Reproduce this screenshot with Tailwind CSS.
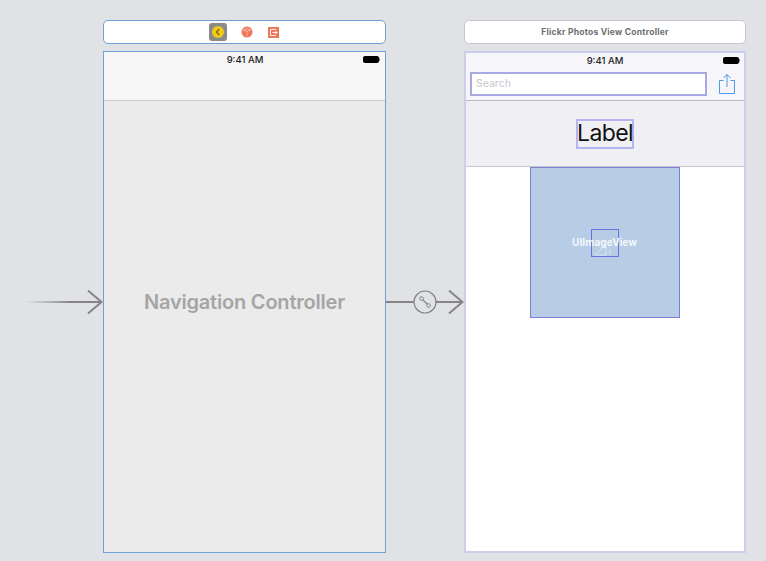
<!DOCTYPE html>
<html lang="en">
<head>
  <meta charset="UTF-8" />
  <meta name="viewport" content="width=device-width, initial-scale=1.0" />
  <title>Storyboard</title>
  <script src="https://cdn.jsdelivr.net/npm/@tailwindcss/browser@4"></script>
</head>
<body class="bg-[#e0e2e5] font-['Inter','Liberation_Sans',sans-serif] text-black overflow-hidden">
  <div class="relative w-[766px] h-[561px] overflow-hidden">

    <!-- initial arrow -->
    <svg class="absolute left-[26px] top-[288px]" width="80" height="28" viewBox="0 0 80 28" fill="none">
      <defs>
        <linearGradient id="fade" x1="0" x2="1" y1="0" y2="0">
          <stop offset="0" stop-color="#8a8a8a" stop-opacity="0" />
          <stop offset="0.6" stop-color="#858585" />
        </linearGradient>
      </defs>
      <rect x="0" y="13" width="75" height="2" fill="url(#fade)" />
      <path d="M62 2.5 L75.5 14 L62 25.5" stroke="#858585" stroke-width="2" />
    </svg>

    <!-- navigation scene -->
    <div class="absolute left-[103px] top-[20px] w-[283px]">
      <div class="h-[24px] bg-white border border-[#6f9fd8] rounded-[5px] flex items-center justify-center gap-[10px]">
        <div class="w-[18px] h-[18px] rounded-[3px] bg-[#8a8a8a] flex items-center justify-center mr-[1px] ml-[-2px]">
          <div class="w-[12px] h-[12px] rounded-full bg-[#f2c916] flex items-center justify-center">
            <svg width="6" height="8" viewBox="0 0 6 8" fill="none"><path d="M4.2 1 L1.6 4 L4.2 7" stroke="#7a6a10" stroke-width="1.4" /></svg>
          </div>
        </div>
        <svg width="12" height="12" viewBox="0 0 12 12" class="ml-[3px]">
          <circle cx="6" cy="6" r="5.5" fill="#f0765a" />
          <path d="M2 4 L6 2.6 L10 4 M6 5.4 V10.5 M2 4 L6 5.4 L10 4" stroke="#fff" stroke-width="0.7" fill="none" opacity="0.6" />
        </svg>
        <div class="ml-[5px] w-[11px] h-[11px] bg-[#f0785a] flex items-center justify-center">
          <svg width="9" height="9" viewBox="0 0 9 9" fill="none"><path d="M7 1.5 H1.5 V7.5 H7 M3.5 4.5 H8 M6.5 3 L8 4.5 L6.5 6" stroke="#fff" stroke-width="0.9" /></svg>
        </div>
      </div>
      <div class="mt-[7px] h-[502px] bg-[#ebebeb] border border-[#6f9fd8] flex flex-col">
        <div class="h-[49px] bg-[#f6f6f7] border-b border-[#c9c9cb] relative shrink-0">
          <div class="text-center text-[9.5px] leading-[15px] font-medium text-[#222] pl-[1px]">9:41 AM</div>
          <div class="absolute right-[5px] top-[4px] flex items-center">
            <div class="w-[16px] h-[7px] rounded-[2px] bg-black"></div>
            <div class="w-[1px] h-[3px] bg-[#777]"></div>
          </div>
        </div>
        <div class="flex-1 flex items-center justify-center pb-[49px]">
          <span class="text-[20px] font-semibold text-[#a5a5a5] tracking-[-0.2px]">Navigation Controller</span>
        </div>
      </div>
    </div>

    <!-- segue -->
    <div class="absolute left-[386px] top-[288px] w-[78px] h-[28px]">
      <svg width="78" height="28" viewBox="0 0 78 28" fill="none">
        <rect x="0" y="13" width="76" height="2" fill="#858585" />
        <path d="M63 2.5 L76.5 14 L63 25.5" stroke="#858585" stroke-width="2" />
        <circle cx="39" cy="14" r="11" fill="#e0e2e5" stroke="#858585" stroke-width="1.2" />
        <path d="M36 11 L42 17" stroke="#858585" stroke-width="1.2" />
        <circle cx="35.5" cy="10.5" r="1.8" fill="#e0e2e5" stroke="#858585" stroke-width="1" />
        <circle cx="42.5" cy="17.5" r="1.8" fill="#e0e2e5" stroke="#858585" stroke-width="1" />
      </svg>
    </div>

    <!-- flickr scene -->
    <div class="absolute left-[464px] top-[20px] w-[282px]">
      <div class="h-[24px] bg-white border border-[#c6c8cc] rounded-[5px] flex items-center justify-center text-[8.5px] font-bold text-[#6e6e6e] tracking-[0.25px]">
        Flickr Photos View Controller
      </div>
      <div class="mt-[7px] h-[502px] bg-white border-2 border-[#cfcdec] flex flex-col">
        <div class="h-[48px] bg-[#f6f6fa] border-b border-[#b9b9bd] relative shrink-0">
          <div class="text-center text-[9.5px] leading-[16px] font-medium text-[#222]">9:41 AM</div>
          <div class="absolute right-[4px] top-[4px] flex items-center">
            <div class="w-[16px] h-[7px] rounded-[2px] bg-black"></div>
            <div class="w-[1px] h-[3px] bg-[#777]"></div>
          </div>
          <div class="absolute left-[4px] top-[19px] w-[237px] h-[24px] bg-white border-2 border-[#a9a9e2] flex items-center pl-[4px] text-[10.5px] text-[#c8c8cc]">Search</div>
          <svg class="absolute left-[252px] top-[20px]" width="18" height="22" viewBox="0 0 18 22" fill="none" stroke="#4a9be8" stroke-width="1">
            <path d="M5.5 7.5 H1.5 V20.5 H16.5 V7.5 H12.5" />
            <path d="M9 14 V1.5 M5.5 5 L9 1.5 L12.5 5" />
          </svg>
        </div>
        <div class="h-[66px] bg-[#efeff4] border-b border-[#c9c9cc] flex items-center justify-center shrink-0">
          <div class="w-[58px] h-[30px] border-2 border-[#b4b4ee] flex items-center justify-center text-[23px] leading-none text-[#111] tracking-[-0.6px]">Label</div>
        </div>
        <div class="flex justify-center">
          <div class="w-[150px] h-[151px] bg-[#b7cce5] border border-[#7b7dd8] relative flex items-center justify-center">
            <div class="w-[28px] h-[28px] border border-[#6e70e0]"></div>
            <svg class="absolute left-[61px] top-[61px]" width="28" height="28" viewBox="0 0 28 28" fill="none" stroke="#dfe8f3" stroke-width="1" opacity="0.9">
              <path d="M3 26 L14 16 V26 Z M18 26 V20" />
            </svg>
            <span class="absolute text-[10px] font-bold text-[#f4f7fb] top-[67px] left-[41px] tracking-[0.1px]">UIImageView</span>
          </div>
        </div>
      </div>
    </div>

  </div>
</body>
</html>
